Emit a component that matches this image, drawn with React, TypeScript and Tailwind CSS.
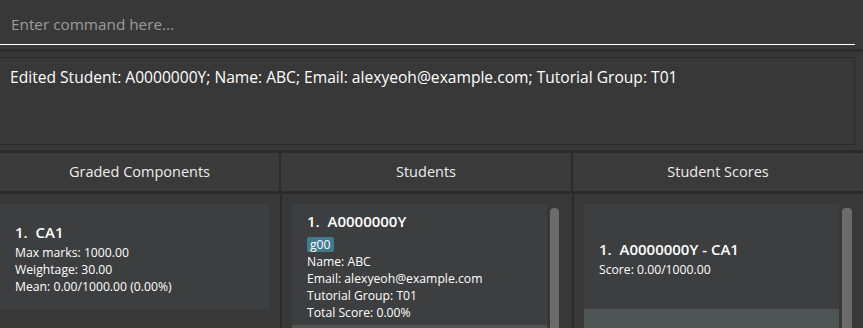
import React from "react";

const font = { fontFamily: '"Open Sans", "Noto Sans", sans-serif' };

export default function App() {
  return (
    <div className="w-[863px] h-[328px] bg-[#383838] overflow-hidden flex flex-col text-white" style={font}>
      {/* command box */}
      <div className="h-[45px] w-[855px] border-b border-white flex items-center pl-[11px] pt-[5px] shrink-0">
        <span className="text-[15.3px] text-[#9c9c9c]">Enter command here...</span>
      </div>
      <div className="h-[4px] shrink-0" />
      <div className="h-[3px] bg-[#2b2b2b] shrink-0" />
      <div className="h-[5px] shrink-0" />
      {/* result display */}
      <div className="h-[88px] w-[855px] border border-l-0 border-[#2c2c2c] pl-[10px] pt-[7px] shrink-0">
        <span className="text-[15.6px] leading-[22px] text-white">
          Edited Student: A0000000Y; Name: ABC; Email: alexyeoh@example.com; Tutorial Group: T01
        </span>
      </div>
      <div className="h-[5px] shrink-0" />
      <div className="h-[3px] bg-[#2b2b2b] shrink-0" />
      {/* headers */}
      <div className="grid grid-cols-[279px_290px_290px] gap-x-[2px] bg-[#2b2b2b] h-[38px] shrink-0">
        <div className="bg-[#3a3a3a] flex items-center justify-center text-[14.5px] text-[#ececec]">Graded Components</div>
        <div className="bg-[#3a3a3a] flex items-center justify-center text-[14.5px] text-[#ececec]">Students</div>
        <div className="bg-[#3a3a3a] flex items-center justify-center text-[14.5px] text-[#ececec]">Student Scores</div>
      </div>
      <div className="h-[3px] bg-[#2b2b2b] shrink-0" />
      {/* lists */}
      <div className="grid grid-cols-[280px_290px_289px] gap-x-[2px] bg-[#2b2b2b] flex-1">
        {/* col 1 */}
        <div className="bg-[#383838] pt-[10px] pr-[10px]">
          <div className="bg-[#3c3e3f] h-[105px] flex flex-col pl-[15px] pt-[18px]">
            <div className="text-[15px] font-semibold leading-[20px] mb-[2px]">1.&nbsp;&nbsp;CA1</div>
            <div className="text-[12.2px] leading-[17px]">Max marks: 1000.00</div>
            <div className="text-[12.2px] leading-[17px]">Weightage: 30.00</div>
            <div className="text-[12.2px] leading-[17px]">Mean: 0.00/1000.00 (0.00%)</div>
          </div>
        </div>
        {/* col 2 */}
        <div className="bg-[#383838] pt-[10px] pl-[10px] flex">
          <div className="w-[255px] flex flex-col">
            <div className="bg-[#3c3e3f] h-[121px] flex flex-col pl-[15px] pt-[7px]">
              <div className="text-[15px] font-semibold leading-[20px]">1.&nbsp;&nbsp;A0000000Y</div>
              <div className="flex mt-[6px] mb-[1px]">
                <span className="bg-[#3e7b91] text-[12.2px] leading-[15px] px-[3px] rounded-[2px]">g00</span>
              </div>
              <div className="text-[12.2px] leading-[17px]">Name: ABC</div>
              <div className="text-[12.2px] leading-[17px]">Email: alexyeoh@example.com</div>
              <div className="text-[12.2px] leading-[17px]">Tutorial Group: T01</div>
              <div className="text-[12.2px] leading-[17px]">Total Score: 0.00%</div>
            </div>
            <div className="bg-[#4f5457] flex-1" />
          </div>
          <div className="ml-[3px] mt-[4px] w-[9px] h-[200px] rounded-[4px] bg-[#6b6b6b]" />
        </div>
        {/* col 3 */}
        <div className="bg-[#383838] pt-[10px] pl-[10px] flex">
          <div className="w-[255px] flex flex-col">
            <div className="bg-[#3c3e3f] h-[105px] flex flex-col pl-[15px] pt-[35px]">
              <div className="text-[15px] font-semibold leading-[20px] mb-[2px]">1.&nbsp;&nbsp;A0000000Y - CA1</div>
              <div className="text-[12.2px] leading-[17px]">Score: 0.00/1000.00</div>
            </div>
            <div className="bg-[#4f5457] flex-1" />
          </div>
          <div className="ml-[3px] mt-[4px] w-[10px] h-[200px] rounded-[4px] bg-[#6b6b6b]" />
        </div>
      </div>
    </div>
  );
}
